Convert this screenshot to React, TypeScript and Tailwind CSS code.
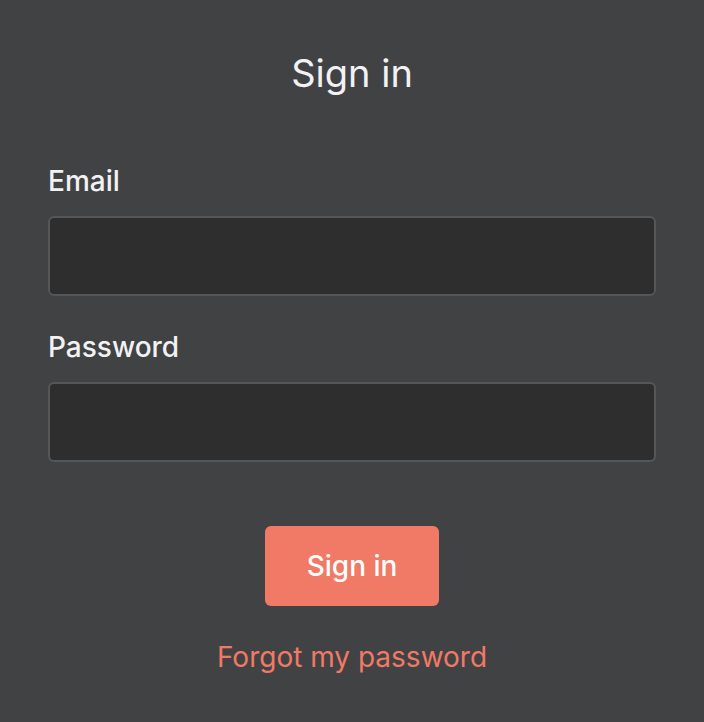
export default function App() {
  return (
    <div
      className="min-h-[722px] w-full bg-[#414244] px-12 pt-[51px] text-[#f2f2f5]"
      style={{ fontFamily: 'Inter, "Noto Sans", sans-serif' }}
    >
      <h1 className="text-center text-[38px] leading-[44px] font-normal">Sign in</h1>

      <form className="mt-[70px] flex flex-col" onSubmit={(e) => e.preventDefault()}>
        <label className="text-[28px] leading-8 font-medium">Email</label>
        <input
          type="email"
          className="mt-[19px] h-20 w-full rounded-md border-2 border-[#555658] bg-[#2e2e2e] px-4 text-2xl outline-none"
        />

        <label className="mt-[35px] text-[28px] leading-8 font-medium">Password</label>
        <input
          type="password"
          className="mt-[19px] h-20 w-full rounded-md border-2 border-[#555658] bg-[#2e2e2e] px-4 text-2xl outline-none"
        />

        <div className="mt-16 flex justify-center">
          <button
            type="submit"
            className="h-20 w-[174px] rounded-md bg-[#f07a65] text-[28px] font-medium text-white"
          >
            Sign in
          </button>
        </div>

        <div className="mt-[35px] text-center">
          <a href="#" className="text-[28px] leading-8 text-[#f07a65]">
            Forgot my password
          </a>
        </div>
      </form>
    </div>
  );
}
